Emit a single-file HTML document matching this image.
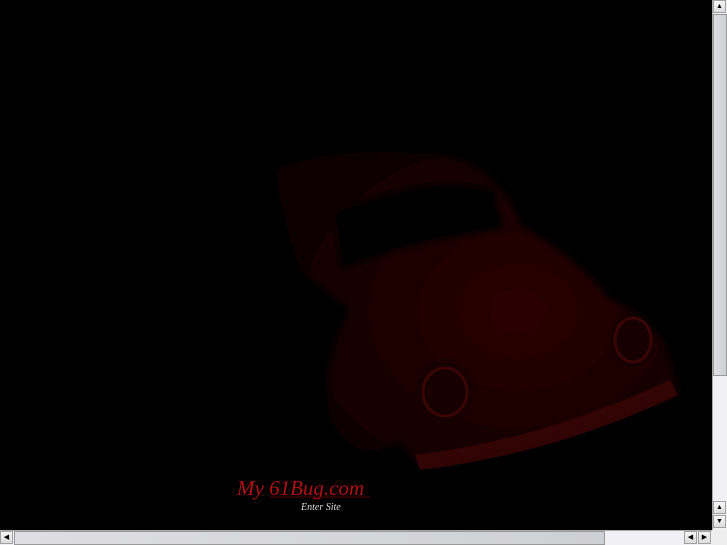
<!DOCTYPE html>
<html><head><style>
html,body{margin:0;padding:0;width:727px;height:545px;overflow:hidden;background:#000;position:relative;font-family:"Liberation Sans",sans-serif}
.vb{position:absolute;left:712px;top:0;width:15px;height:530px;background:#f1f1f4;border-left:1px solid #aaa}
.hb{position:absolute;left:0;top:530px;width:712px;height:15px;background:#f1f1f4;border-top:1px solid #aaa}
.btn{position:absolute;width:13px;height:13px;background:linear-gradient(#f6f6f6,#dcdcdc);border:1px solid #a0a0a0;box-sizing:border-box;font-size:7px;line-height:12px;text-align:center;color:#000}
.thumb{position:absolute;background:linear-gradient(90deg,#dedee2,#cfd0d4);border:1px solid #999;box-sizing:border-box}
.corner{position:absolute;left:712px;top:530px;width:15px;height:15px;background:#eee}
</style></head><body>
<svg width="712" height="530" style="position:absolute;left:0;top:0">
<defs><filter id="b"><feGaussianBlur stdDeviation="4"/></filter>
<radialGradient id="g" cx="0.6" cy="0.5" r="0.6"><stop offset="0" stop-color="#2c0303"/><stop offset="1" stop-color="#0e0101"/></radialGradient></defs>
<g filter="url(#b)">
<path d="M275 170 Q330 145 440 155 Q500 165 520 225 Q580 260 610 300 Q660 320 670 360 L680 395 L560 440 L420 470 L400 440 Q360 470 330 420 Q320 360 350 310 L300 270 L290 240 L280 200 Z" fill="url(#g)"/>
<path d="M335 215 Q420 170 495 190 L505 230 Q420 240 340 270 Z" fill="#050000"/>
<ellipse cx="445" cy="390" rx="28" ry="30" fill="#150101"/>
<ellipse cx="632" cy="340" rx="22" ry="26" fill="#150101"/>
</g>
<path d="M415 455 Q540 440 670 380 L678 395 Q550 455 420 470 Z" fill="#3a0505" opacity="0.8"/>
<ellipse cx="445" cy="392" rx="22" ry="24" fill="none" stroke="#3a0505" stroke-width="3"/>
<ellipse cx="633" cy="340" rx="18" ry="22" fill="none" stroke="#3a0505" stroke-width="3"/>
<text x="237" y="495" font-family="Liberation Serif,serif" font-style="italic" font-size="21" fill="#b01010">My 61Bug.com</text>
<line x1="270" y1="497" x2="370" y2="497" stroke="#500" stroke-width="1"/>
<text x="301" y="510" font-family="Liberation Serif,serif" font-style="italic" font-size="10" fill="#ddd">Enter Site</text>
</svg>
<div class="vb">
<div class="btn" style="left:0;top:0">▲</div>
<div class="thumb" style="left:0;top:14px;width:14px;height:362px"></div>
<div class="btn" style="left:0;top:501px">▲</div>
<div class="btn" style="left:0;top:515px">▼</div>
</div>
<div class="hb">
<div class="btn" style="left:0;top:0">◀</div>
<div class="thumb" style="left:14px;top:0;width:591px;height:14px"></div>
<div class="btn" style="left:684px;top:0">◀</div>
<div class="btn" style="left:698px;top:0">▶</div>
</div>
<div class="corner"></div>
</body></html>
